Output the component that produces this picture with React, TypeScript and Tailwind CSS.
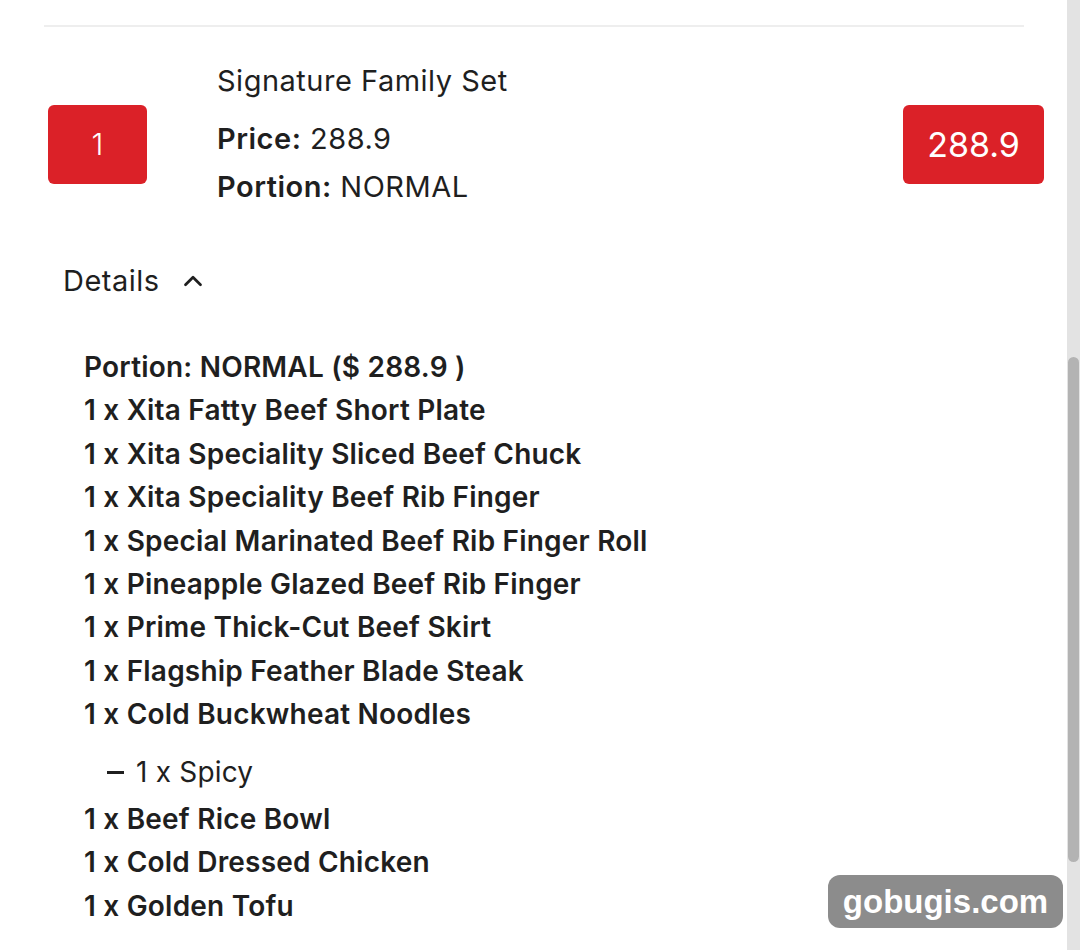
import { ChevronUp } from "lucide-react";

const items: { text: string; sub?: boolean }[] = [
  { text: "1 x Xita Fatty Beef Short Plate" },
  { text: "1 x Xita Speciality Sliced Beef Chuck" },
  { text: "1 x Xita Speciality Beef Rib Finger" },
  { text: "1 x Special Marinated Beef Rib Finger Roll" },
  { text: "1 x Pineapple Glazed Beef Rib Finger" },
  { text: "1 x Prime Thick-Cut Beef Skirt" },
  { text: "1 x Flagship Feather Blade Steak" },
  { text: "1 x Cold Buckwheat Noodles" },
  { text: "1 x Spicy", sub: true },
  { text: "1 x Beef Rice Bowl" },
  { text: "1 x Cold Dressed Chicken" },
  { text: "1 x Golden Tofu" },
];

export default function App() {
  return (
    <div
      className="relative flex h-[950px] w-[1080px] overflow-hidden bg-white text-[#1f1f1f]"
      style={{ fontFamily: "Inter, 'Noto Sans', sans-serif" }}
    >
      <div className="flex-1 pt-[25px]">
        <div className="ml-[44px] mr-[43px] border-t-2 border-[#eeeeee]" />

        {/* cart row */}
        <div className="mt-[36px] flex items-start pl-[48px] pr-[23px]">
          <div className="mt-[42px] flex h-[79px] w-[99px] items-center justify-center rounded-[6px] bg-[#db2128] text-[30px] font-light text-white">
            1
          </div>
          <div className="ml-[70px] flex-1">
            <div className="text-[29px] leading-[36px] tracking-[0.5px]">Signature Family Set</div>
            <div className="mt-[22px] text-[29px] leading-[36px] tracking-[0.5px]">
              <span className="font-semibold">Price:</span> 288.9
            </div>
            <div className="mt-[12px] text-[29px] leading-[36px] tracking-[0.5px]">
              <span className="font-semibold">Portion:</span> NORMAL
            </div>
          </div>
          <div className="mt-[42px] flex h-[79px] w-[141px] items-center justify-center rounded-[6px] bg-[#db2128] text-[34px] text-white">
            288.9
          </div>
        </div>

        {/* details toggle */}
        <div className="mt-[58px] flex items-center pl-[63px]">
          <span className="text-[29px] leading-[36px] tracking-[0.5px]">Details</span>
          <ChevronUp className="ml-[18px] h-[30px] w-[30px]" strokeWidth={2.2} />
        </div>

        {/* details list */}
        <div className="mt-[47px] pl-[84px]">
          <div className="text-[28px] font-semibold leading-[43.4px] tracking-[0.2px]">
            Portion: NORMAL ($ 288.9 )
          </div>
          {items.map((it, i) =>
            it.sub ? (
              <div
                key={i}
                className="flex items-center pb-[4px] pl-[23px] pt-[14px] text-[28px] leading-[43.4px] tracking-[0.2px]"
              >
                <span className="mr-[12px] inline-block h-[3px] w-[17px] bg-[#1f1f1f]" />
                {it.text}
              </div>
            ) : (
              <div key={i} className="text-[28px] font-semibold leading-[43.4px] tracking-[0.2px]">
                {it.text}
              </div>
            )
          )}
        </div>
      </div>

      {/* scrollbar */}
      <div className="relative w-[13px] bg-[#e3e3e3]">
        <div className="absolute left-[1px] right-[1px] top-[357px] h-[505px] rounded-full bg-[#b3b3b3]" />
      </div>

      {/* watermark */}
      <div
        className="absolute left-[828px] top-[875px] flex h-[53px] w-[235px] items-center justify-center rounded-[12px] bg-[#8c8c8c] text-[33px] font-bold text-white"
        style={{ fontFamily: "'Liberation Sans', Arial, sans-serif" }}
      >
        gobugis.com
      </div>
    </div>
  );
}
